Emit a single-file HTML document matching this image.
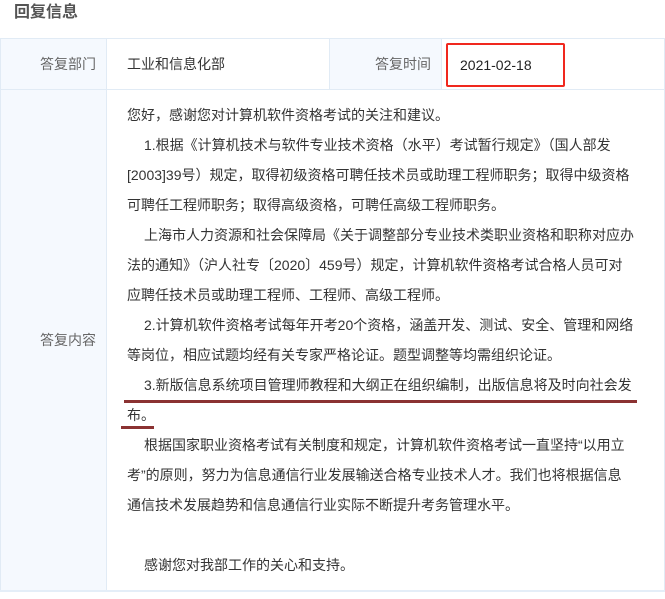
<!DOCTYPE html>
<html><head><meta charset="utf-8">
<style>
*{margin:0;padding:0;box-sizing:border-box}
body{width:665px;height:599px;background:#fff;font-family:"Liberation Sans","Noto Sans CJK SC",sans-serif;position:relative;overflow:hidden;color:#333}
.title{position:absolute;left:14px;top:2px;font-size:16px;font-weight:bold;color:#555;line-height:22px}
.cell{position:absolute;border:1px solid #e1ebf5}
.lab{background:#f5f9fe;color:#666;font-size:14px;text-align:right;padding-right:10px}
.txt{position:absolute;left:127px;font-size:14px;line-height:30px;white-space:nowrap;color:#333}
.ind{padding-left:17px}
</style></head><body>
<div class="title">回复信息</div>
<div class="cell lab" style="left:0;top:38px;width:107px;height:52px;line-height:50px">答复部门</div>
<div class="cell" style="left:106px;top:38px;width:224px;height:52px;line-height:50px;font-size:14px;padding-left:20px">工业和信息化部</div>
<div class="cell lab" style="left:329px;top:38px;width:113px;height:52px;line-height:50px">答复时间</div>
<div class="cell" style="left:441px;top:38px;width:224px;height:52px"></div>
<div style="position:absolute;left:446px;top:43px;width:119px;height:44px;border:2px solid #f0281e;border-radius:2px;font-size:14px;line-height:40px;padding-left:12px;color:#222">2021-02-18</div>
<div class="cell lab" style="left:0;top:89px;width:107px;height:502px;line-height:500px">答复内容</div>
<div class="cell" style="left:106px;top:89px;width:559px;height:502px"></div>
<div style="position:absolute;left:0;top:590px;width:665px;height:2px;background:#e4eef8"></div>
<div class="txt" style="top:100px">您好，感谢您对计算机软件资格考试的关注和建议。</div>
<div class="txt ind" style="top:130px">1.根据《计算机技术与软件专业技术资格（水平）考试暂行规定》（国人部发</div>
<div class="txt" style="top:160px">[2003]39号）规定，取得初级资格可聘任技术员或助理工程师职务；取得中级资格</div>
<div class="txt" style="top:190px">可聘任工程师职务；取得高级资格，可聘任高级工程师职务。</div>
<div class="txt ind" style="top:220px">上海市人力资源和社会保障局《关于调整部分专业技术类职业资格和职称对应办</div>
<div class="txt" style="top:250px">法的通知》（沪人社专〔2020〕459号）规定，计算机软件资格考试合格人员可对</div>
<div class="txt" style="top:280px">应聘任技术员或助理工程师、工程师、高级工程师。</div>
<div class="txt ind" style="top:310px">2.计算机软件资格考试每年开考20个资格，涵盖开发、测试、安全、管理和网络</div>
<div class="txt" style="top:340px">等岗位，相应试题均经有关专家严格论证。题型调整等均需组织论证。</div>
<div class="txt ind" style="top:370px">3.新版信息系统项目管理师教程和大纲正在组织编制，出版信息将及时向社会发</div>
<div class="txt" style="top:400px">布。</div>
<div class="txt ind" style="top:430px">根据国家职业资格考试有关制度和规定，计算机软件资格考试一直坚持“以用立</div>
<div class="txt" style="top:460px">考”的原则，努力为信息通信行业发展输送合格专业技术人才。我们也将根据信息</div>
<div class="txt" style="top:490px">通信技术发展趋势和信息通信行业实际不断提升考务管理水平。</div>
<div class="txt ind" style="top:550px">感谢您对我部工作的关心和支持。</div>
<div style="position:absolute;left:124px;top:400px;width:513px;height:3px;background:#8b3232"></div>
<div style="position:absolute;left:121px;top:426px;width:33px;height:3px;background:#8b3232"></div>
</body></html>
